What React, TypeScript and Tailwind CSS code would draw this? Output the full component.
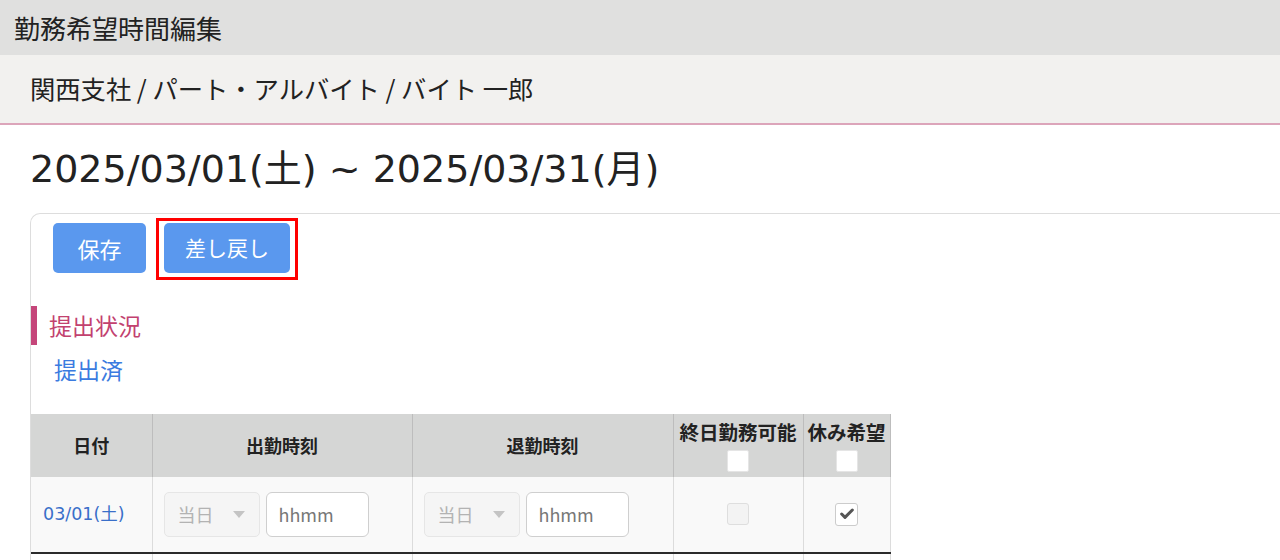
import { Check } from "lucide-react";

const SelectBox = () => (
  <div className="flex h-[45px] w-[96px] items-center justify-between rounded-[5px] border border-[#e6e6e6] bg-[#f5f5f5] pl-[13px] pr-[14px] text-[18px] text-[#b3b3b3]">
    <span>当日</span>
    <svg width="12" height="7" viewBox="0 0 12 7">
      <path d="M0 0 L12 0 L6 7 Z" fill="#c4c4c4" />
    </svg>
  </div>
);

const TimeInput = () => (
  <div className="flex h-[45px] w-[103px] items-center rounded-[6px] border border-[#cfcfcf] bg-white pl-[12px] text-[18px] text-[#777]">
    hhmm
  </div>
);

const TimeCell = () => (
  <td className="border-r border-[#dcdcdc] pl-[11px]">
    <div className="flex items-center gap-[6px]">
      <SelectBox />
      <TimeInput />
    </div>
  </td>
);

export default function App() {
  return (
    <div className="h-[560px] w-[1280px] overflow-hidden bg-white font-['Noto_Sans_CJK_JP','Noto_Sans',sans-serif] text-[#222]">
      <div className="flex h-[55px] items-center bg-[#e0e0df] pl-[14px] text-[26px]">
        勤務希望時間編集
      </div>
      <div className="flex h-[70px] items-center border-b-2 border-[#dca5ba] bg-[#f2f1ef] pl-[30px] text-[25.3px]">
        関西支社 / パート・アルバイト / バイト 一郎
      </div>

      <h1 className="flex h-[88px] items-center pl-[30px] font-['DejaVu_Sans','Noto_Sans_CJK_JP',sans-serif] text-[38px]">
        2025/03/01(土) ~ 2025/03/31(月)
      </h1>

      <div className="ml-[30px] w-[1300px] rounded-tl-[10px] border-l border-t border-[#dddddd] pb-[40px]">
        <div className="flex items-start pl-[22px] pt-[4px]">
          <button className="mt-[5px] h-[50px] w-[93px] rounded-[5px] bg-[#5a98ee] text-[22px] text-white">
            保存
          </button>
          <div className="ml-[10px] border-[3px] border-[#ff0000] px-[5px] pb-[4px] pt-[2px]">
            <button className="h-[50px] w-[126px] rounded-[5px] bg-[#5a98ee] text-[21px] text-white">
              差し戻し
            </button>
          </div>
        </div>

        <div className="mt-[26px] flex h-[39px] items-center border-l-[6px] border-[#c5467a] pl-[12px] text-[23px] text-[#c2416f]">
          提出状況
        </div>
        <div className="mt-[7px] pl-[23px] text-[23px] text-[#3b7be0]">提出済</div>

        <table className="mt-[27px] border-collapse text-[18px]">
          <thead>
            <tr className="h-[63px] bg-[#d5d6d5] font-bold">
              <th className="w-[121px] border-r border-[#bdbdbd]">日付</th>
              <th className="w-[260px] border-r border-[#bdbdbd]">出勤時刻</th>
              <th className="w-[261px] border-r border-[#bdbdbd]">退勤時刻</th>
              <th className="w-[130px] border-r border-[#bdbdbd] align-top">
                <div className="flex flex-col items-center pt-[4px] text-[19.5px] leading-[28px]">
                  終日勤務可能
                  <span className="mt-[4px] h-[22px] w-[22px] rounded-[2px] border border-[#e5e5e5] bg-white" />
                </div>
              </th>
              <th className="w-[87px] border-r border-[#bdbdbd] align-top">
                <div className="flex flex-col items-center pt-[4px] text-[19.5px] leading-[28px]">
                  休み希望
                  <span className="mt-[4px] h-[22px] w-[22px] rounded-[2px] border border-[#e5e5e5] bg-white" />
                </div>
              </th>
            </tr>
          </thead>
          <tbody>
            <tr className="h-[76px] border-b-2 border-[#2b2b2b] bg-[#f9f9f9]">
              <td className="border-r border-[#dcdcdc] pl-[12px] font-['DejaVu_Sans','Noto_Sans_CJK_JP',sans-serif] text-[17.5px] text-[#3a6fc9]">
                03/01(土)
              </td>
              <TimeCell />
              <TimeCell />
              <td className="border-r border-[#dcdcdc]">
                <div className="flex justify-center">
                  <span className="h-[22px] w-[22px] rounded-[3px] border border-[#dedede] bg-[#f3f3f3]" />
                </div>
              </td>
              <td className="border-r border-[#dcdcdc]">
                <div className="flex justify-center">
                  <span className="flex h-[23px] w-[23px] items-center justify-center rounded-[3px] border border-[#cccccc] bg-white">
                    <Check size={16} strokeWidth={4.5} color="#555" />
                  </span>
                </div>
              </td>
            </tr>
            <tr className="h-[76px] bg-white">
              <td className="border-r border-[#dcdcdc]" />
              <td className="border-r border-[#dcdcdc]" />
              <td className="border-r border-[#dcdcdc]" />
              <td className="border-r border-[#dcdcdc]" />
              <td className="border-r border-[#dcdcdc]" />
            </tr>
          </tbody>
        </table>
      </div>
    </div>
  );
}
